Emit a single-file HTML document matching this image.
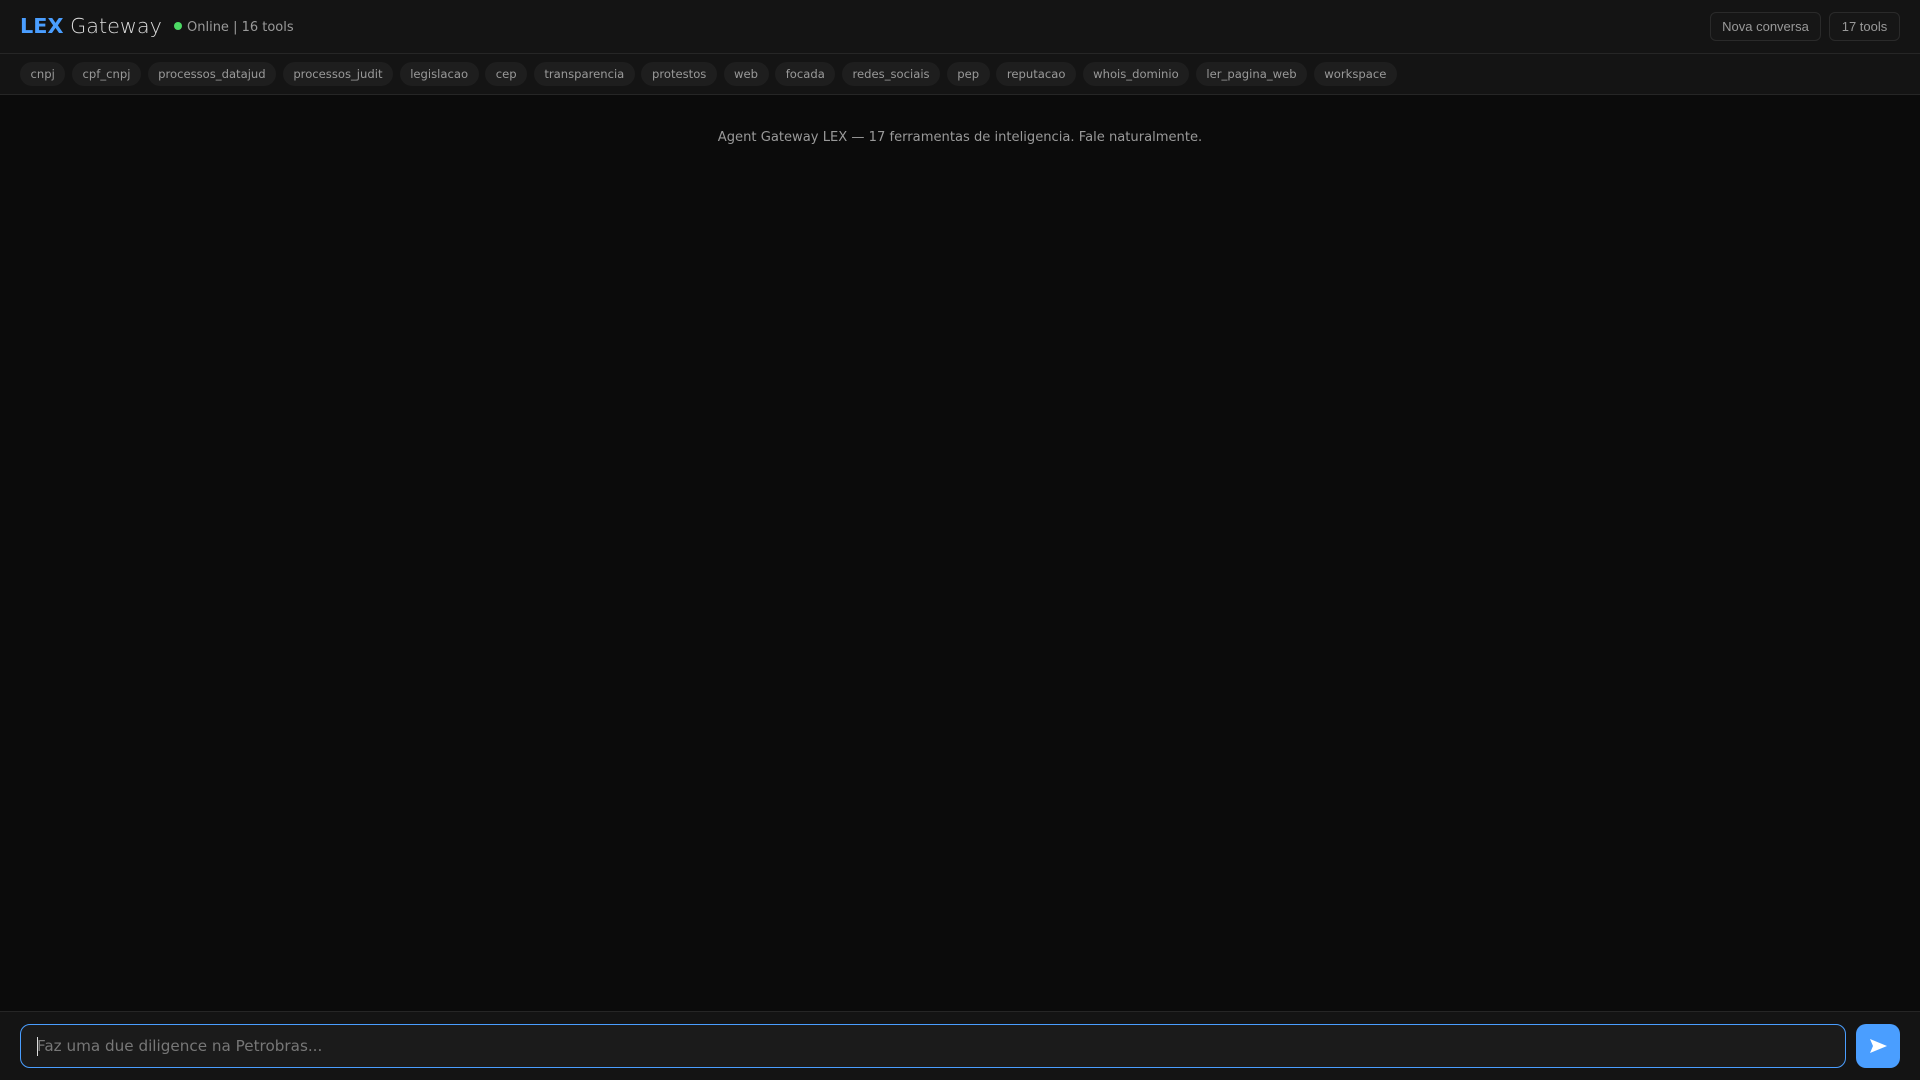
<!DOCTYPE html>
<html><head><meta charset="utf-8"><style>
*{box-sizing:border-box;margin:0;padding:0}
body{width:1920px;height:1080px;background:#0b0b0b;font-family:"DejaVu Sans",sans-serif;color:#ccc;position:relative;overflow:hidden}
.hdr{position:absolute;left:0;top:0;width:1920px;height:54px;background:#141414;border-bottom:1px solid #262626}
.logo{position:absolute;left:20px;top:14px;font-size:20.8px;color:#ddd;font-weight:300}
.logo b{color:#4a9eff;font-weight:700}
.st{position:absolute;left:174px;top:20px;font-size:13px;color:#9a9a9a}
.st i{display:inline-block;width:8px;height:8px;border-radius:50%;background:#4cd964;margin-right:5px;vertical-align:1px}
.btn{position:absolute;top:12px;height:29px;border:1px solid #2a2a2a;border-radius:6px;font:13px "Liberation Sans",sans-serif;color:#999;line-height:27px;text-align:center;background:#161616}
.tags{position:absolute;left:0;top:54px;width:1920px;height:41px;background:#141414;border-bottom:1px solid #262626;padding:8px 0 0 20px;display:flex;gap:6.7px}
.tags span{background:#1e1e1e;border-radius:12px;height:24px;line-height:24px;padding:0 10.5px;font-size:11.6px;color:#999}
.c{position:absolute;top:130px;width:1920px;text-align:center;font-size:13.1px;color:#999}
.ft{position:absolute;left:0;top:1011px;width:1920px;height:69px;background:#141414;border-top:1px solid #262626}
.in{position:absolute;left:20px;top:1024px;width:1826px;height:44px;border:1px solid #4a9eff;border-radius:10px;background:#1b1b1b;font-size:15.2px;color:#777;padding:11px 16px;line-height:20px}
.in:before{content:"";position:absolute;left:16px;top:12px;width:1px;height:19px;background:#ddd}
.send{position:absolute;left:1856px;top:1024px;width:44px;height:44px;border-radius:10px;background:#4a9eff}
</style></head><body>
<div class="hdr"><div class="logo"><b>LEX</b> Gateway</div><div class="st"><i></i>Online | 16 tools</div>
<div class="btn" style="left:1710px;width:111px">Nova conversa</div>
<div class="btn" style="left:1829px;width:71px">17 tools</div></div>
<div class="tags"><span>cnpj</span><span>cpf_cnpj</span><span>processos_datajud</span><span>processos_judit</span><span>legislacao</span><span>cep</span><span>transparencia</span><span>protestos</span><span>web</span><span>focada</span><span>redes_sociais</span><span>pep</span><span>reputacao</span><span>whois_dominio</span><span>ler_pagina_web</span><span>workspace</span></div>
<div class="c">Agent Gateway LEX — 17 ferramentas de inteligencia. Fale naturalmente.</div>
<div class="ft"></div>
<div class="in">Faz uma due diligence na Petrobras...</div>
<div class="send"><svg width="44" height="44" viewBox="0 0 44 44"><path d="M14 15 L31 22 L14 29 L17 22 Z" fill="#fff"/></svg></div>
</body></html>
